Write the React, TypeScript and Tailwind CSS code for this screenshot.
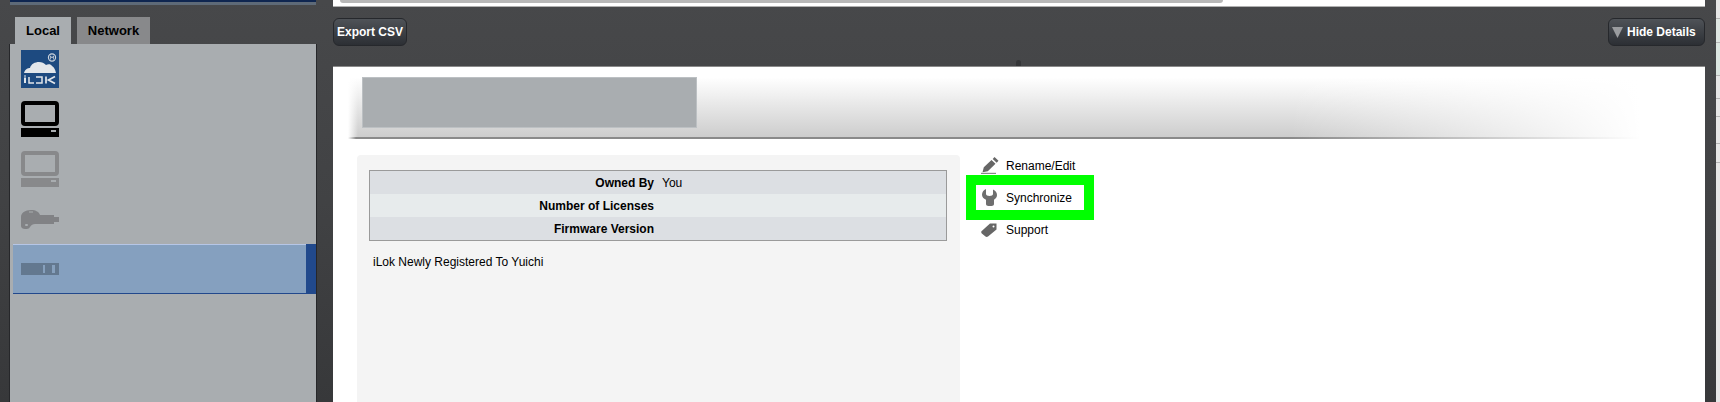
import React from "react";

const font = { fontFamily: '"Liberation Sans", Arial, sans-serif' };

function ILokIcon() {
  return (
    <svg width="38" height="38" viewBox="0 0 38 38" className="block">
      <rect width="38" height="38" fill="#1d4a80" />
      <circle cx="31" cy="7.500" r="3.600" fill="none" stroke="#cfd6de" strokeWidth="1.100" />
      <path d="M29.400 9.500V5.800L31 8l1.600-2.200v3.700" fill="none" stroke="#cfd6de" strokeWidth="0.800" />
      <path d="M3 23c1-4 4-5 6-5 1-4 5-6 9-6 3 0 5 1 7 3 2-1 5-1 6 1 2 1 3 3 4 7z" fill="#e2e6ea" />
      <rect x="3" y="27.500" width="2" height="5.500" fill="#e2e6ea" />
      <rect x="3" y="25.500" width="2" height="1" fill="#e2e6ea" />
      <path d="M8 27v6h5M15 27h6v6h-6" fill="none" stroke="#e2e6ea" strokeWidth="1.500" />
      <path d="M25 26.500v7M34 26.500l-6.500 3.500 6.500 3.500" fill="none" stroke="#e2e6ea" strokeWidth="1.700" />
    </svg>
  );
}

function ComputerIcon({ color }: { color: string }) {
  return (
    <svg width="38" height="36" viewBox="0 0 38 36" className="block">
      <rect x="2" y="2" width="34" height="21" rx="2" fill="none" stroke={color} strokeWidth="4" />
      <path fillRule="evenodd" d="M0 27h38v9H0z M30 29v2h5v-2z" fill={color} />
    </svg>
  );
}

function KeyIcon() {
  return (
    <svg width="38" height="19" viewBox="0 0 38 19" className="block">
      <path
        d="M0 7C0 3 4 0 10 0c5 0 8 2 9 5h14v2h5v5h-5v2H14c-2 0-4 1-5 3-1 2-3 2-5 2-2 0-4-1-4-3z"
        fill="#818285"
      />
      <rect x="8" y="1.500" width="4" height="1" fill="#a9adb0" />
      <rect x="4" y="14" width="3" height="2" rx="1" fill="#a9adb0" />
    </svg>
  );
}

function DongleIcon() {
  return (
    <svg width="38" height="12" viewBox="0 0 38 12" className="block">
      <rect width="38" height="12" fill="#63788f" />
      <rect x="22" y="2" width="2" height="8" fill="#86a0bd" />
      <rect x="31" y="2" width="3" height="8" fill="#86a0bd" />
    </svg>
  );
}

function PencilIcon() {
  return (
    <svg width="18" height="17" viewBox="0 0 18 17" className="block">
      <path d="M13.500 0l4 3.800-1.800 1.900-4-3.800zM10.500 3l4 3.800-7.700 7.400-5.300 1 1.300-5z" fill="#666" />
      <rect x="0" y="15.800" width="15" height="1.200" fill="#888" />
    </svg>
  );
}

function WrenchIcon() {
  return (
    <svg width="15" height="17" viewBox="0 0 15 17" className="block">
      <path
        d="M4 0v5c0 1 1.500 2 3.500 2S11 6 11 5V0.500C13.500 1.500 15 3.500 15 6c0 2-1.200 3.800-3 4.700V15c0 1-1 2-2.500 2h-3C5 17 4 16 4 15v-4.300C1.500 9.800 0 8 0 5.800 0 3.200 1.500 1 4 0z"
        fill="#6e6e6e"
      />
    </svg>
  );
}

function TagIcon() {
  return (
    <svg width="16" height="14" viewBox="0 0 16 14" className="block">
      <path fillRule="evenodd" d="M9 0.500h6.500v6L7 13.500c-.8.500-1.800.500-2.500 0L.8 10.500C0 9.800 0 8.500 1 7.800zM12.500 2.500a1 1 0 100 2 1 1 0 000-2z" fill="#666" />
    </svg>
  );
}

function DarkButton({ children, className }: { children: React.ReactNode; className: string }) {
  return (
    <div
      className={`flex items-center h-[28px] rounded-[6px] border border-[#26282c] bg-gradient-to-b from-[#4f5358] to-[#2c2f34] text-white font-bold text-[12px] ${className}`}
    >
      {children}
    </div>
  );
}

function SideItem({ children, className }: { children: React.ReactNode; className: string }) {
  return <div className={`flex items-center pl-[11px] ${className}`}>{children}</div>;
}

const rows = [
  { label: "Owned By", value: "You", bg: "bg-[#dcdfe3]" },
  { label: "Number of Licenses", value: "", bg: "bg-[#e7ebec]" },
  { label: "Firmware Version", value: "", bg: "bg-[#dcdfe3]" },
];

export default function App() {
  return (
    <div
      style={font}
      className="flex w-[1720px] h-[402px] overflow-hidden bg-gradient-to-b from-[#47484a] via-[#414244] to-[#37383a] text-black"
    >
      {/* Sidebar */}
      <div className="flex flex-col w-[318px] shrink-0 pl-[9px] pr-[1px]">
        <div className="h-[5px] mx-[1px] bg-[#5e6a78] border-t-[2px] border-[#0f2650] shrink-0" />
        <div className="flex items-end h-[39px] pl-[6px] gap-[6px] shrink-0 text-[13px] font-bold">
          <div className="w-[56px] h-[27px] flex items-center justify-center bg-[#a9adb0]">Local</div>
          <div className="w-[73px] h-[27px] flex items-center justify-center bg-[#88898b]">Network</div>
        </div>
        <div className="flex-1 bg-[#a9adb0] border-x border-[#26272a] flex flex-col">
          <SideItem className="h-[50px]">
            <ILokIcon />
          </SideItem>
          <SideItem className="h-[50px]">
            <ComputerIcon color="#000" />
          </SideItem>
          <SideItem className="h-[50px]">
            <ComputerIcon color="#88898b" />
          </SideItem>
          <SideItem className="h-[50px]">
            <KeyIcon />
          </SideItem>
          <div className="ml-[3px] h-[50px] flex items-center bg-[#85a0bf] border-t border-[#b6c6e6] border-b border-b-[#22488c] relative pl-[8px]">
            <DongleIcon />
            <div className="absolute right-0 -top-px -bottom-px w-[10px] bg-[#21498c]" />
          </div>
        </div>
      </div>

      {/* Main */}
      <div className="flex flex-col w-[1387px] shrink-0 pl-[15px]">
        <div className="h-[7px] shrink-0 bg-white border-b border-[#b0b0b0] pl-[7px] pr-[482px]">
          <div className="h-[3px] bg-[#b8b8b8] rounded-b-[3px]" />
        </div>
        <div className="relative h-[59px] shrink-0 flex items-start justify-between pt-[11px]">
          <DarkButton className="w-[74px] justify-center">Export CSV</DarkButton>
          <DarkButton className="w-[97px] pl-[3px] gap-[4px]">
            <svg width="11" height="11" viewBox="0 0 11 11" className="block">
              <path d="M0 0h11L5.500 11z" fill="#9a9c9f" />
            </svg>
            Hide Details
          </DarkButton>
          <div className="absolute bottom-0 left-[683px] w-[5px] h-[6px] rounded-t-full bg-[#353638]" />
        </div>

        <div className="flex-1 bg-white border-t border-[#8a8a8a] flex flex-col">
          <div className="relative h-[72px] shrink-0 ml-[15px] mr-[65px] pt-[10px] pl-[14px] bg-gradient-to-b from-white from-[15%] to-[#cdcdcd] border-b-[2px] border-[#8a8a8a]">
            <div className="absolute inset-y-0 left-0 w-[10px] bg-gradient-to-r from-white to-transparent" />
            <div className="absolute inset-y-0 right-0 w-[350px] bg-gradient-to-r from-transparent to-white" />
            <div className="absolute -bottom-[2px] right-0 h-[2px] w-[350px] bg-gradient-to-r from-transparent to-white" />
            <div className="absolute -bottom-[2px] left-0 h-[2px] w-[8px] bg-gradient-to-r from-white to-transparent" />
            <div className="relative w-[335px] h-[51px] bg-[#a9adb0] border border-[#bcc0c3]" />
          </div>

          <div className="flex pt-[16px] pl-[24px]">
            <div className="w-[603px] h-[260px] shrink-0 bg-[#f4f4f4] rounded-[4px] pt-[15px] pl-[12px] pr-[13px]">
              <div className="border border-[#9a9a9a] text-[12px]">
                {rows.map((r) => (
                  <div key={r.label} className={`flex h-[23px] items-center ${r.bg}`}>
                    <div className="w-[284px] text-right font-bold">{r.label}</div>
                    <div className="pl-[8px]">{r.value}</div>
                  </div>
                ))}
              </div>
              <div className="text-[12px] mt-[12px] pl-[4px]">iLok Newly Registered To Yuichi</div>
            </div>

            <div className="flex flex-col text-[12px] -mt-[2px] ml-[16px]">
              <div className="flex items-center h-[25px] w-[108px]">
                <div className="w-[30px] pl-[5px]"><PencilIcon /></div>
                Rename/Edit
              </div>
              <div className="flex items-center h-[25px] w-[108px] mt-[7px] bg-white outline-[10px] outline-solid outline-[#00ff00]">
                <div className="w-[30px] pl-[6px]"><WrenchIcon /></div>
                Synchronize
              </div>
              <div className="flex items-center h-[25px] w-[108px] mt-[7px]">
                <div className="w-[30px] pl-[5px]"><TagIcon /></div>
                Support
              </div>
            </div>
          </div>
        </div>
      </div>

      {/* Edge of the window behind */}
      <div className="w-[4px] ml-[11px] shrink-0 bg-[#e6e6e6] flex flex-col">
        <div className="h-[19px] border-b border-[#b5b5b5] bg-[#e6e6e6]" />
        <div className="h-[24px] border-b border-[#b5b5b5] bg-[#dfe6e2]" />
        <div className="h-[33px] border-b border-[#b5b5b5] bg-[#dce6e1]" />
        <div className="h-[23px] border-b border-[#b5b5b5]" />
        <div className="h-[18px] border-b border-[#b5b5b5]" />
        <div className="h-[27px] border-b border-[#b5b5b5]" />
        <div className="h-[19px] border-b border-[#b5b5b5]" />
      </div>
    </div>
  );
}
